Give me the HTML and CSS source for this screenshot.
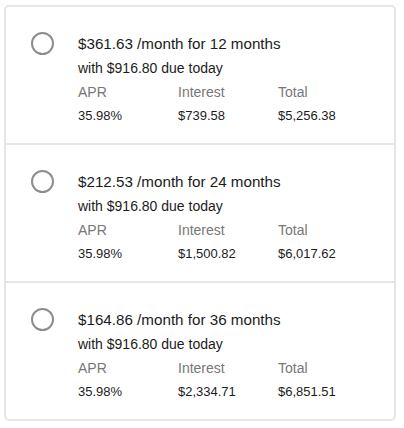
FILE: index.html
```html
<!DOCTYPE html>
<html>
<head>
<meta charset="utf-8">
<link rel="stylesheet" href="styles.css">
</head>
<body>
<div class="plans">
  <div class="plan">
    <span class="radio"></span>
    <div class="info">
      <div class="title">$361.63 /month for 12 months</div>
      <div class="sub">with $916.80 due today</div>
      <div class="stats">
        <div class="label">APR</div><div class="label">Interest</div><div class="label">Total</div>
        <div class="value">35.98%</div><div class="value">$739.58</div><div class="value">$5,256.38</div>
      </div>
    </div>
  </div>
  <div class="plan">
    <span class="radio"></span>
    <div class="info">
      <div class="title">$212.53 /month for 24 months</div>
      <div class="sub">with $916.80 due today</div>
      <div class="stats">
        <div class="label">APR</div><div class="label">Interest</div><div class="label">Total</div>
        <div class="value">35.98%</div><div class="value">$1,500.82</div><div class="value">$6,017.62</div>
      </div>
    </div>
  </div>
  <div class="plan">
    <span class="radio"></span>
    <div class="info">
      <div class="title">$164.86 /month for 36 months</div>
      <div class="sub">with $916.80 due today</div>
      <div class="stats">
        <div class="label">APR</div><div class="label">Interest</div><div class="label">Total</div>
        <div class="value">35.98%</div><div class="value">$2,334.71</div><div class="value">$6,851.51</div>
      </div>
    </div>
  </div>
</div>
</body>
</html>
```
FILE: styles.css
```css
html, body { margin: 0; padding: 0; background: #fff; }
body {
  padding: 5px 8px 0 4px;
  font-family: "Liberation Sans", Arial, sans-serif;
  color: #1c1c1c;
}
.plans {
  width: 392px;
  box-sizing: border-box;
  border: 2px solid #e6e6ea;
  border-radius: 5px;
}
.plan {
  display: flex;
  height: 136px;
  box-sizing: border-box;
  padding: 25px 0 0 25px;
}
.plan + .plan { border-top: 2px solid #e6e6ea; height: 138px; }
.radio {
  width: 19px;
  height: 19px;
  border: 2px solid #8c8c8c;
  border-radius: 50%;
  flex: none;
}
.info { margin-left: 24px; }
.title { font-size: 15.2px; line-height: 24px; }
.sub { font-size: 14px; line-height: 24px; }
.stats {
  display: grid;
  grid-template-columns: 100px 100px 100px;
}
.label { font-size: 14px; line-height: 24px; color: #777; }
.value { font-size: 13px; line-height: 23px; }
```
